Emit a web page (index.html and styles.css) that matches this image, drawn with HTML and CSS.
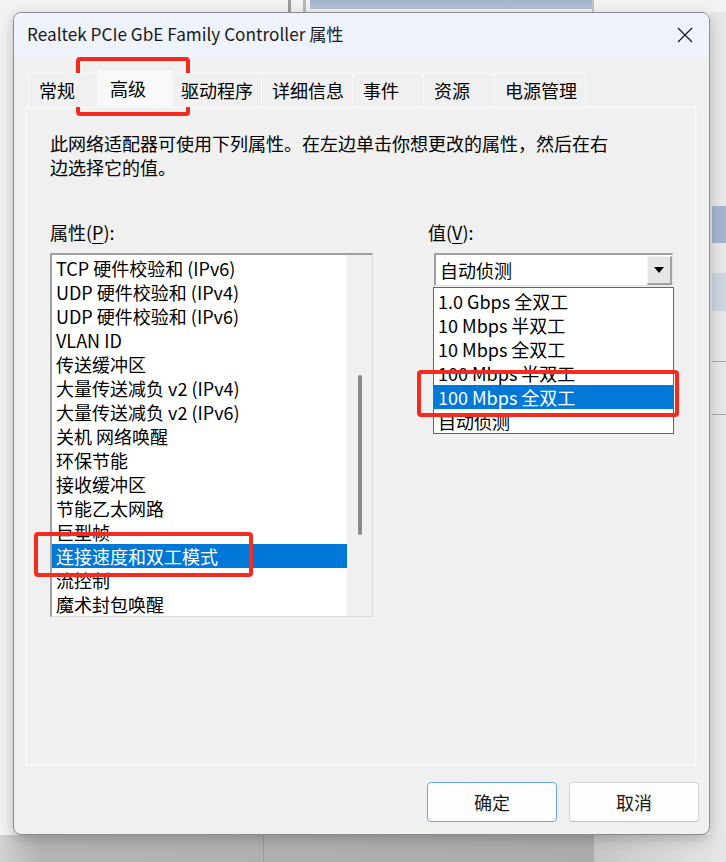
FILE: index.html
```html
<!DOCTYPE html>
<html>
<head>
    <title>Realtek PCIe GbE Family Controller 属性</title>
    <link rel="stylesheet" href="styles.css">
</head>
<body>
    <div class="desktop">
        <div class="dialog">
            <!-- Title bar -->
            <div class="titlebar">
                <span class="title">Realtek PCIe GbE Family Controller 属性</span>
                <svg class="close" width="16" height="16" viewBox="0 0 16 16">
                    <path d="M1 1 L15 15 M15 1 L1 15" stroke="#1a1a1a" stroke-width="1.3" fill="none"/>
                </svg>
            </div>

            <div class="dialog-body">
                <div class="tabs">
                    <div class="tab">常规</div>
                    <div class="tab active">高级</div>
                    <div class="tab">驱动程序</div>
                    <div class="tab">详细信息</div>
                    <div class="tab">事件</div>
                    <div class="tab">资源</div>
                    <div class="tab">电源管理</div>
                </div>

                <div class="panel">
                    <p class="desc">此网络适配器可使用下列属性。在左边单击你想更改的属性，然后在右<br>边选择它的值。</p>

                    <div class="columns">
                        <div class="col-left">
                            <div class="label">属性(<u>P</u>):</div>
                            <div class="listbox">
                                <ul class="items">
                                    <li>TCP 硬件校验和 (IPv6)</li>
                                    <li>UDP 硬件校验和 (IPv4)</li>
                                    <li>UDP 硬件校验和 (IPv6)</li>
                                    <li>VLAN ID</li>
                                    <li>传送缓冲区</li>
                                    <li>大量传送减负 v2 (IPv4)</li>
                                    <li>大量传送减负 v2 (IPv6)</li>
                                    <li>关机 网络唤醒</li>
                                    <li>环保节能</li>
                                    <li>接收缓冲区</li>
                                    <li>节能乙太网路</li>
                                    <li>巨型帧</li>
                                    <li class="selected">连接速度和双工模式</li>
                                    <li>流控制</li>
                                    <li>魔术封包唤醒</li>
                                </ul>
                                <div class="scrollbar"><div class="thumb"></div></div>
                            </div>
                        </div>

                        <div class="col-right">
                            <div class="label">值(<u>V</u>):</div>
                            <div class="combo">
                                <span class="combo-text">自动侦测</span>
                                <div class="combo-btn">
                                    <svg width="10" height="6" viewBox="0 0 10 6"><polygon points="0,0 10,0 5,6" fill="#000"/></svg>
                                </div>
                                <ul class="dropdown">
                                    <li>1.0 Gbps 全双工</li>
                                    <li>10 Mbps 半双工</li>
                                    <li>10 Mbps 全双工</li>
                                    <li>100 Mbps 半双工</li>
                                    <li class="selected">100 Mbps 全双工</li>
                                    <li>自动侦测</li>
                                </ul>
                            </div>
                        </div>
                    </div>
                </div>

                <div class="buttons">
                    <button class="btn default">确定</button>
                    <button class="btn">取消</button>
                </div>
            </div>
        </div>
    </div>

    <!-- red annotation marks -->
    <div class="mark mark-tab"></div>
    <div class="mark mark-item"></div>
    <div class="mark mark-value"></div>
</body>
</html>
```

FILE: styles.css
```css
body {
    margin: 0;
    width: 726px;
    height: 862px;
    overflow: hidden;
    position: relative;
    font-family: "Noto Sans CJK SC", sans-serif;
    color: #000;
}

.desktop {
    width: 726px;
    height: 862px;
    box-sizing: border-box;
    padding: 12px 0 0 13px;
    background:
        linear-gradient(#a2b4cd, #b6c4d8) 310px 0 / 282px 9px no-repeat,
        linear-gradient(#9c9c9c, #9c9c9c) 288px 0 / 3px 12px no-repeat,
        linear-gradient(#b8b8b8, #b8b8b8) 303px 0 / 3px 12px no-repeat,
        linear-gradient(#c4c4c4, #c4c4c4) 592px 0 / 2px 12px no-repeat,
        linear-gradient(#a4b5cf, #a4b5cf) 712px 206px / 14px 37px no-repeat,
        linear-gradient(#ccd5e1, #ccd5e1) 712px 273px / 14px 38px no-repeat,
        linear-gradient(#a8a8a8, #a8a8a8) 712px 361px / 14px 1px no-repeat,
        linear-gradient(#a8a8a8, #a8a8a8) 712px 414px / 14px 1px no-repeat,
        linear-gradient(#e7e7e7, #e7e7e7) 710px 12px / 16px 823px no-repeat,
        linear-gradient(#9a9a9a, #9a9a9a) 263px 835px / 1px 27px no-repeat,
        linear-gradient(90deg, #c6c6c6, #dcdcdc 70%, #e6e6e6) 594px 835px / 132px 27px no-repeat,
        linear-gradient(90deg, #d2d2d2, #b4b4b4 40px, #ababab) 0 835px / 594px 27px no-repeat,
        #f2f2f2;
}

.dialog {
    width: 697px;
    height: 823px;
    box-sizing: border-box;
    border: 1px solid #8c8c8c;
    border-radius: 8px;
    background: #f0f0f0;
    overflow: hidden;
    box-shadow: 0 4px 14px rgba(0, 0, 0, 0.22);
    display: flex;
    flex-direction: column;
}

.titlebar {
    height: 45px;
    box-sizing: border-box;
    flex: none;
    background: #eef2fa;
    display: flex;
    align-items: center;
    justify-content: space-between;
    padding: 0 16px 4px 13px;
}
.title { font-size: 17.2px; color: #1a1a1a; }
.close { display: block; margin-top: 2px; }

.dialog-body {
    flex: 1;
    padding: 12px 10px 0 12px;
    display: flex;
    flex-direction: column;
}

/* Tabs */
.tabs { display: flex; align-items: flex-end; height: 37px; padding-left: 2px; position: relative; z-index: 1; }
.tab {
    height: 34px;
    min-width: 72px;
    box-sizing: border-box;
    padding: 0 8px 0 10px;
    font-size: 18px;
    line-height: 32px;
    background: #f0f0f0;
    border: 1px solid #fafafa;
    border-bottom: none;
    margin-right: -1px;
}
.tab.active {
    height: 38px;
    min-width: 76px;
    margin: 0 -3px -1px -2px;
    padding-left: 12px;
    line-height: 34px;
    background: #f9f9f9;
    border-color: #f5f5f5;
    position: relative;
}

.panel {
    height: 658px;
    box-sizing: border-box;
    margin-right: 3px;
    border: 1px solid #fbfbfb;
    box-shadow: 0 0 0 1px #f5f5f5;
    padding: 23px 0 0 23px;
}

.desc { margin: 0; font-size: 18px; line-height: 24px; }

.columns { display: flex; margin-top: 41px; }
.col-left { width: 323px; }
.col-right { margin-left: 55px; }
.label { font-size: 18px; line-height: 24px; }
.label u { text-underline-offset: 3px; text-decoration-thickness: 1px; }

/* Properties list */
.listbox {
    margin-top: 9px;
    width: 323px;
    height: 364px;
    box-sizing: border-box;
    border-style: solid;
    border-width: 2px 1px 1px 2px;
    border-color: #a0a0a0 #dcdcdc #dcdcdc #a0a0a0;
    background: #fff;
    display: flex;
}
.items { list-style: none; margin: 0; padding: 1px 0 0; width: 295px; }
.items li, .dropdown li {
    height: 24px;
    line-height: 24px;
    font-size: 18px;
    padding-left: 4px;
    white-space: nowrap;
}
.items li.selected, .dropdown li.selected { background: #0078d7; color: #fff; }

.scrollbar { flex: 1; background: #f0f0f0; display: flex; justify-content: center; padding-top: 120px; }
.thumb { width: 4px; height: 160px; border-radius: 2px; background: #8a8a8a; }

/* Value combo */
.combo {
    margin: 9px 0 0 6px;
    width: 239px;
    height: 33px;
    box-sizing: border-box;
    border-style: solid;
    border-width: 2px 1px 1px 2px;
    border-color: #a0a0a0 #e3e3e3 #e3e3e3 #a0a0a0;
    background: #fff;
    display: flex;
    align-items: center;
    justify-content: space-between;
    position: relative;
}
.combo-text { font-size: 18px; line-height: 24px; padding-left: 4px; }
.combo-btn {
    width: 25px;
    height: 29px;
    box-sizing: border-box;
    background: #e6e6e6;
    border-style: solid;
    border-width: 1px 2px 2px 1px;
    border-color: #f6f6f6 #a0a0a0 #a0a0a0 #f6f6f6;
    display: flex;
    align-items: center;
    justify-content: center;
}

.dropdown {
    position: absolute;
    top: 32px;
    left: -3px;
    width: 241px;
    height: 147px;
    box-sizing: border-box;
    margin: 0;
    padding: 1px 0 0;
    list-style: none;
    background: #fff;
    border: 1px solid #646464;
}

/* Buttons */
.buttons { display: flex; justify-content: flex-end; gap: 12px; margin-top: 17px; }
.btn {
    width: 130px;
    height: 40px;
    font-family: "Noto Sans CJK SC", sans-serif;
    font-size: 18px;
    color: #1a1a1a;
    background: #fdfdfd;
    border: 1px solid #d6d6d6;
    border-bottom-color: #c4c4c4;
    border-radius: 4px;
}
.btn.default { border-color: #6aa8e4; }

/* Annotation marks */
.mark { position: absolute; border: 4px solid #f62b1f; border-radius: 4px; box-sizing: border-box; }
.mark-tab { left: 76px; top: 57px; width: 114px; height: 59px; }
.mark-item { left: 34px; top: 532px; width: 219px; height: 45px; }
.mark-value { left: 417px; top: 370px; width: 262px; height: 47px; }
```
